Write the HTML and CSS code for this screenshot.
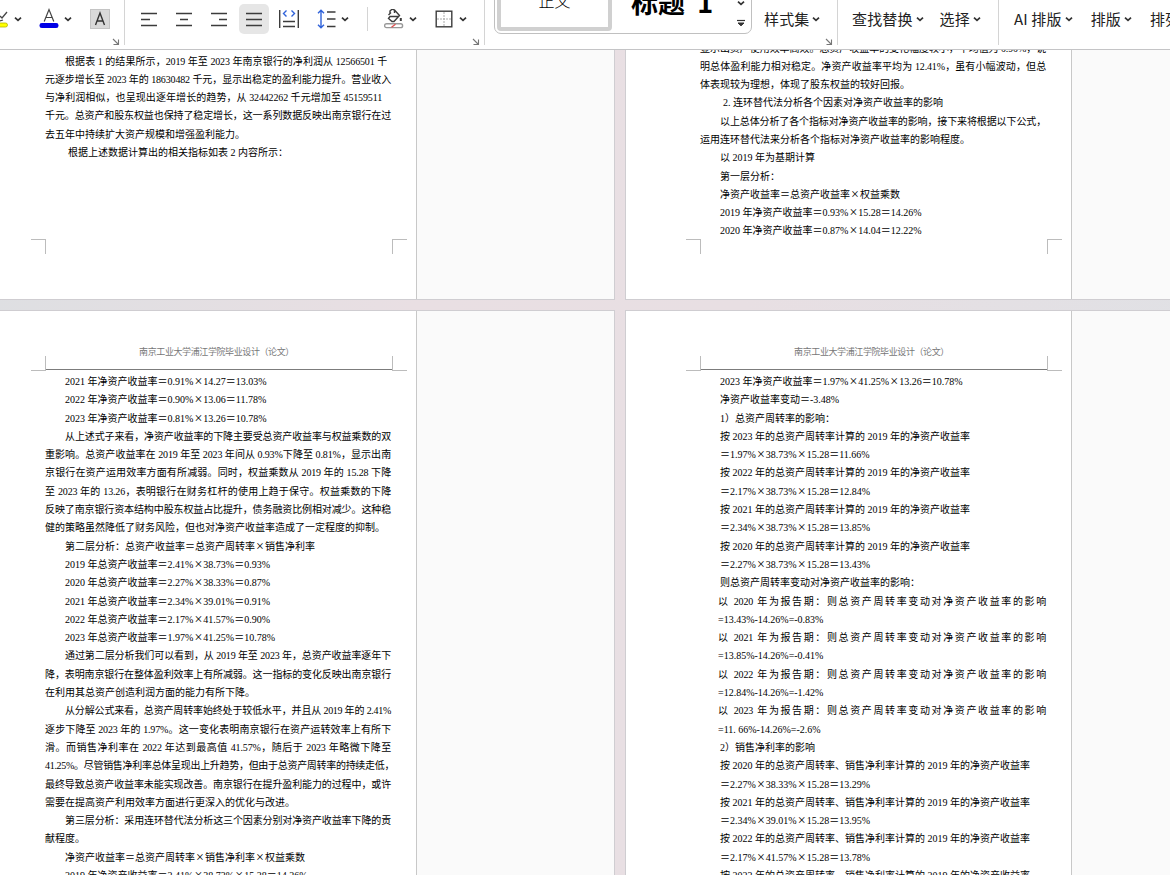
FILE: index.html
```
<!DOCTYPE html>
<html lang="zh-CN">
<head>
    <meta charset="UTF-8">
    <meta name="viewport" content="width=device-width, initial-scale=1.0">
    <title>毕业设计（论文）</title>
    <link rel="stylesheet" href="styles.css">
</head>
<body>
    <svg class="defs" width="0" height="0">
        <symbol id="chevron" viewBox="0 0 10 10"><path d="M2 3.600 5 6.400 8 3.600" fill="none" stroke="#333" stroke-width="1.7"/></symbol>
        <symbol id="launcher" viewBox="0 0 8 8"><path d="M1 1l5 5M6.500 1.500v5h-5" fill="none" stroke="#777" stroke-width="1.1"/></symbol>
    </svg>

    <header class="ribbon">
        <div class="group group-font">
            <svg class="icon-highlight" width="13" height="30" viewBox="0 0 13 30"><path d="M0 12l2 2 5-6M0 17l3-1" fill="none" stroke="#444" stroke-width="1.3"/><rect x="-8" y="19" width="15.500" height="4" rx="2" fill="#ff0" stroke="#b5b500" stroke-width=".8"/></svg>
            <svg class="chev"><use href="#chevron"/></svg>
            <svg class="icon-color" width="20" height="30" viewBox="0 0 20 30"><path d="M5.200 17.500 10 5.500l4.800 12M6.800 13.500h6.400" fill="none" stroke="#444" stroke-width="1.2"/><rect x=".5" y="19" width="19" height="5" rx="2.300" fill="#0000e6"/></svg>
            <svg class="chev"><use href="#chevron"/></svg>
            <svg class="icon-shade" width="20" height="20" viewBox="0 0 20 20"><rect x=".5" y=".5" width="19" height="19" fill="#d9d9d9" stroke="#c4c4c4"/><path d="M5.500 16 10 4l4.500 12M7 12h6" fill="none" stroke="#333" stroke-width="1.4"/></svg>
            <svg class="launcher"><use href="#launcher"/></svg>
        </div>

        <div class="group group-para">
            <div class="tool"><svg width="18" height="18"><path d="M1 3.500h16M1 9.500h9M1 15.500h16"/></svg></div>
            <div class="tool"><svg width="18" height="18"><path d="M1 3.500h16M5 9.500h8M1 15.500h16"/></svg></div>
            <div class="tool"><svg width="18" height="18"><path d="M1 3.500h16M9 9.500h8M1 15.500h16"/></svg></div>
            <div class="tool active"><svg width="18" height="18"><path d="M1 3.500h16M1 9.500h16M1 15.500h16"/></svg></div>
            <div class="tool"><svg width="20" height="20"><path d="M.7 1v18M19.300 1v18M4 12.500h12M4 17.500h12"/><path class="blue" d="M7.500 1.500 4.500 4.500l3 3M12.500 1.500l3 3-3 3"/></svg></div>
            <svg class="icon-spacing" width="20" height="20"><path d="M10 3h8.500M10 10h8.500M10 17.500h8.500"/><path class="blue" d="M4 1.500v17M1 4.200l3-3 3 3M1 15.800l3 3 3-3"/></svg>
            <svg class="chev"><use href="#chevron"/></svg>
            <span class="divider"></span>
            <svg class="icon-fill" width="20" height="20"><path d="M4.500 6 7 3.500M10.500 1l5 5.500-5.500 6H8L4.500 9.500 6 7.500H14M6 4V2q2.500-3 4.500-.8V4"/><path d="M16.800 9v3" stroke-width="2"/><rect x=".6" y="14.800" width="18" height="3.800" rx="1.900" stroke="#999"/><path class="red" d="M7.500 18.200l4-3"/></svg>
            <svg class="chev"><use href="#chevron"/></svg>
            <svg class="icon-border" width="18" height="18"><path d="M9 2v14M2 9h14" class="dots"/><rect x="1.200" y="1.200" width="15.600" height="15.600"/></svg>
            <svg class="chev"><use href="#chevron"/></svg>
            <svg class="launcher"><use href="#launcher"/></svg>
        </div>

        <div class="group group-style">
            <div class="gallery">
                <div class="style-item selected">正文</div>
                <div class="style-item heading">标题 1</div>
                <div class="gallery-nav">
                    <svg class="chev"><use href="#chevron"/></svg>
                    <svg width="10" height="10"><path d="M1 1.500h8" stroke="#333" stroke-width="1.200"/><path d="M2 4 5 6.800 8 4z" fill="#333" stroke="#333" stroke-width="1"/></svg>
                </div>
            </div>
            <button class="menu">样式集<svg class="chev"><use href="#chevron"/></svg></button>
            <svg class="launcher"><use href="#launcher"/></svg>
        </div>

        <div class="group group-edit">
            <button class="menu">查找替换<svg class="chev"><use href="#chevron"/></svg></button>
            <button class="menu">选择<svg class="chev"><use href="#chevron"/></svg></button>
        </div>

        <div class="group group-layout">
            <button class="menu">AI 排版<svg class="chev"><use href="#chevron"/></svg></button>
            <button class="menu">排版<svg class="chev"><use href="#chevron"/></svg></button>
            <button class="menu">排列</button>
        </div>
    </header>

    <main class="workspace">
        <section class="sheet left top">
            <div class="paper">
                <div class="text">
                    <p class="in full inset">根据表 1 的结果所示，2019 年至 2023 年南京银行的净利润从 12566501 千</p>
                    <p class="full">元逐步增长至 2023 年的 18630482 千元，显示出稳定的盈利能力提升。营业收入</p>
                    <p class="full inset-more">与净利润相似，也呈现出逐年增长的趋势，从 32442262 千元增加至 45159511</p>
                    <p class="full">千元。总资产和股东权益也保持了稳定增长，这一系列数据反映出南京银行在过</p>
                    <p>去五年中持续扩大资产规模和增强盈利能力。</p>
                    <p class="in3">根据上述数据计算出的相关指标如表 2 内容所示：</p>
                </div>
                <div class="crop crop-bottom"><i></i><i></i></div>
            </div>
        </section>

        <section class="sheet right top">
            <div class="paper">
                <div class="text">
                    <p class="full">显示出资产使用效率高效。总资产收益率的变化幅度较小，平均值为 0.90%，说</p>
                    <p class="full">明总体盈利能力相对稳定。净资产收益率平均为 12.41%，虽有小幅波动，但总</p>
                    <p>体表现较为理想，体现了股东权益的较好回报。</p>
                    <p class="in3">2. 连环替代法分析各个因素对净资产收益率的影响</p>
                    <p class="in full">以上总体分析了各个指标对净资产收益率的影响，接下来将根据以下公式，</p>
                    <p>运用连环替代法来分析各个指标对净资产收益率的影响程度。</p>
                    <p class="in">以 2019 年为基期计算</p>
                    <p class="in">第一层分析：</p>
                    <p class="in">净资产收益率＝总资产收益率<b>×</b>权益乘数</p>
                    <p class="in">2019 年净资产收益率＝0.93%<b>×</b>15.28＝14.26%</p>
                    <p class="in">2020 年净资产收益率＝0.87%<b>×</b>14.04＝12.22%</p>
                </div>
                <div class="crop crop-bottom"><i></i><i></i></div>
            </div>
        </section>

        <section class="sheet left">
            <div class="paper">
                <div class="page-header">南京工业大学浦江学院毕业设计（论文）</div>
                <div class="crop crop-top"><i></i><i></i></div>
                <div class="text">
                    <p class="in">2021 年净资产收益率＝0.91%<b>×</b>14.27＝13.03%</p>
                    <p class="in">2022 年净资产收益率＝0.90%<b>×</b>13.06＝11.78%</p>
                    <p class="in">2023 年净资产收益率＝0.81%<b>×</b>13.26＝10.78%</p>
                    <p class="in full">从上述式子来看，净资产收益率的下降主要受总资产收益率与权益乘数的双</p>
                    <p class="full">重影响。总资产收益率在 2019 年至 2023 年间从 0.93%下降至 0.81%，显示出南</p>
                    <p class="full">京银行在资产运用效率方面有所减弱。同时，权益乘数从 2019 年的 15.28 下降</p>
                    <p class="full">至 2023 年的 13.26，表明银行在财务杠杆的使用上趋于保守。权益乘数的下降</p>
                    <p class="full">反映了南京银行资本结构中股东权益占比提升，债务融资比例相对减少。这种稳</p>
                    <p>健的策略虽然降低了财务风险，但也对净资产收益率造成了一定程度的抑制。</p>
                    <p class="in">第二层分析：总资产收益率＝总资产周转率<b>×</b>销售净利率</p>
                    <p class="in">2019 年总资产收益率＝2.41%<b>×</b>38.73%＝0.93%</p>
                    <p class="in">2020 年总资产收益率＝2.27%<b>×</b>38.33%＝0.87%</p>
                    <p class="in">2021 年总资产收益率＝2.34%<b>×</b>39.01%＝0.91%</p>
                    <p class="in">2022 年总资产收益率＝2.17%<b>×</b>41.57%＝0.90%</p>
                    <p class="in">2023 年总资产收益率＝1.97%<b>×</b>41.25%＝10.78%</p>
                    <p class="in full">通过第二层分析我们可以看到，从 2019 年至 2023 年，总资产收益率逐年下</p>
                    <p class="full">降，表明南京银行在整体盈利效率上有所减弱。这一指标的变化反映出南京银行</p>
                    <p>在利用其总资产创造利润方面的能力有所下降。</p>
                    <p class="in full tight">从分解公式来看，总资产周转率始终处于较低水平，并且从 2019 年的 2.41%</p>
                    <p class="full">逐步下降至 2023 年的 1.97%。这一变化表明南京银行在资产运转效率上有所下</p>
                    <p class="full">滑。而销售净利率在 2022 年达到最高值 41.57%，随后于 2023 年略微下降至</p>
                    <p class="full tight">41.25%。尽管销售净利率总体呈现出上升趋势，但由于总资产周转率的持续走低，</p>
                    <p class="full">最终导致总资产收益率未能实现改善。南京银行在提升盈利能力的过程中，或许</p>
                    <p>需要在提高资产利用效率方面进行更深入的优化与改进。</p>
                    <p class="in full">第三层分析：采用连环替代法分析这三个因素分别对净资产收益率下降的贡</p>
                    <p>献程度。</p>
                    <p class="in">净资产收益率＝总资产周转率<b>×</b>销售净利率<b>×</b>权益乘数</p>
                    <p class="in">2019 年净资产收益率＝2.41%<b>×</b>38.73%<b>×</b>15.28＝14.26%</p>
                </div>
            </div>
        </section>

        <section class="sheet right">
            <div class="paper">
                <div class="page-header">南京工业大学浦江学院毕业设计（论文）</div>
                <div class="crop crop-top"><i></i><i></i></div>
                <div class="text">
                    <p class="in">2023 年净资产收益率＝1.97%<b>×</b>41.25%<b>×</b>13.26＝10.78%</p>
                    <p class="in">净资产收益率变动＝-3.48%</p>
                    <p class="in">1）总资产周转率的影响：</p>
                    <p class="in">按 2023 年的总资产周转率计算的 2019 年的净资产收益率</p>
                    <p class="in">＝1.97%<b>×</b>38.73%<b>×</b>15.28＝11.66%</p>
                    <p class="in">按 2022 年的总资产周转率计算的 2019 年的净资产收益率</p>
                    <p class="in">＝2.17%<b>×</b>38.73%<b>×</b>15.28＝12.84%</p>
                    <p class="in">按 2021 年的总资产周转率计算的 2019 年的净资产收益率</p>
                    <p class="in">＝2.34%<b>×</b>38.73%<b>×</b>15.28＝13.85%</p>
                    <p class="in">按 2020 年的总资产周转率计算的 2019 年的净资产收益率</p>
                    <p class="in">＝2.27%<b>×</b>38.73%<b>×</b>15.28＝13.43%</p>
                    <p class="in">则总资产周转率变动对净资产收益率的影响：</p>
                    <p class="hang full">以 2020 年为报告期：则总资产周转率变动对净资产收益率的影响</p>
                    <p class="hang">=13.43%-14.26%=-0.83%</p>
                    <p class="hang full">以 2021 年为报告期：则总资产周转率变动对净资产收益率的影响</p>
                    <p class="hang">=13.85%-14.26%=-0.41%</p>
                    <p class="hang full">以 2022 年为报告期：则总资产周转率变动对净资产收益率的影响</p>
                    <p class="hang">=12.84%-14.26%=-1.42%</p>
                    <p class="hang full">以 2023 年为报告期：则总资产周转率变动对净资产收益率的影响</p>
                    <p class="hang">=11. 66%-14.26%=-2.6%</p>
                    <p class="in">2）销售净利率的影响</p>
                    <p class="in">按 2020 年的总资产周转率、销售净利率计算的 2019 年的净资产收益率</p>
                    <p class="in">＝2.27%<b>×</b>38.33%<b>×</b>15.28＝13.29%</p>
                    <p class="in">按 2021 年的总资产周转率、销售净利率计算的 2019 年的净资产收益率</p>
                    <p class="in">＝2.34%<b>×</b>39.01%<b>×</b>15.28＝13.95%</p>
                    <p class="in">按 2022 年的总资产周转率、销售净利率计算的 2019 年的净资产收益率</p>
                    <p class="in">＝2.17%<b>×</b>41.57%<b>×</b>15.28＝13.78%</p>
                    <p class="in">按 2023 年的总资产周转率、销售净利率计算的 2019 年的净资产收益率</p>
                </div>
            </div>
        </section>
    </main>
</body>
</html>
```
FILE: styles.css
```
* {
    margin: 0;
    padding: 0;
    box-sizing: border-box;
}

body {
    width: 1170px;
    height: 875px;
    overflow: hidden;
    font-family: "Noto Sans CJK SC", sans-serif;
    color: #222;
    background-color: #e3e0e4;
}

svg {
    display: block;
    flex: none;
}

.defs {
    display: none;
}

/* Ribbon */
.ribbon {
    display: flex;
    height: 50px;
    overflow: hidden;
    background-color: #fff;
    border-bottom: 1px solid #c4c4c6;
}

.group {
    position: relative;
    display: flex;
    align-items: center;
    flex: none;
    height: 45px;
    padding-bottom: 7px;
    border-right: 1px solid #d4d4d4;
}

.group-font { width: 125px; }
.group-para { width: 360px; padding-left: 9px; }
.group-style { width: 353px; padding-left: 9px; }
.group-edit { width: 161px; padding-left: 14px; gap: 15px; }
.group-layout { width: 171px; padding-left: 15px; gap: 17px; border-right: none; }

.chev {
    width: 10px;
    height: 10px;
}

.launcher {
    position: absolute;
    right: 4px;
    bottom: -1px;
    width: 8px;
    height: 8px;
}

.icon-color { margin: 0 4px 0 16px; }
.icon-shade { margin-left: 17px; }

.tool {
    display: flex;
    align-items: center;
    justify-content: center;
    width: 30px;
    height: 30px;
    margin-right: 5px;
    border-radius: 5px;
}

.tool.active {
    background-color: #e6e6e6;
}

.group-para svg:not(.chev):not(.launcher) {
    fill: none;
    stroke: #3c3c3c;
    stroke-width: 1.4;
}

.group-para .blue { stroke: #2f62d9; }
.group-para .red { stroke: #e05050; }
.group-para .dots { stroke: #aaa; stroke-dasharray: 2 1; stroke-width: 1; }

.icon-spacing { margin: 0 3px 0 8px; }

.divider {
    width: 1px;
    height: 24px;
    margin: 0 16px 0 17px;
    background-color: #d4d4d4;
}

.icon-fill { margin-right: 4px; }
.icon-border { margin: 0 5px 0 17px; }

/* Style gallery, its upper part is scrolled out of view */
.gallery {
    display: flex;
    width: 258px;
    height: 47px;
    margin-top: -13px;
    padding: 0 4px 2px 2px;
    align-self: flex-start;
    flex: none;
    border: 1px solid #c0c0c0;
    border-radius: 7px;
}

.style-item {
    width: 115px;
    height: 43px;
    color: #000;
    white-space: nowrap;
}

.style-item.selected {
    border: 4px solid #d0d0d0;
    border-radius: 4px;
    font-size: 16px;
    font-weight: 300;
    line-height: 17px;
    text-align: center;
}

.style-item.heading {
    width: 121px;
    padding-left: 19px;
    font-size: 27px;
    font-weight: 700;
    line-height: 28px;
    word-spacing: 6px;
}

.gallery-nav {
    display: flex;
    flex-direction: column;
    gap: 11px;
    margin-left: 3px;
    padding-top: 10px;
}

.menu {
    display: flex;
    align-items: center;
    gap: 2px;
    flex: none;
    border: none;
    background: none;
    font-family: "Noto Sans CJK SC", sans-serif;
    font-size: 15px;
    line-height: 22px;
    letter-spacing: 0.15px;
    color: #222;
    white-space: nowrap;
}

.group-style .menu {
    margin-left: 12px;
}

/* Document pages */
.workspace {
    display: grid;
    grid-template-columns: 614px 544px;
    grid-template-rows: 249px 564px;
    gap: 12px;
    height: 825px;
    overflow: hidden;
    background: linear-gradient(100deg, #dddfe2 0%, #e9dfe3 35%, #e8dfe3 60%, #dfe1e5 100%);
}

.sheet {
    overflow: hidden;
    background-color: #fafafa;
    box-shadow: 0 0 0 1px #cfcdd1;
}

.paper {
    display: flow-root;
    height: 100%;
    border-right: 1px solid #c8c8c8;
    background-color: #fff;
}

.left .paper { width: 417px; padding-left: 45px; }
.right .paper { width: 446px; padding-left: 74px; }

.text {
    width: 346px;
    font-family: "Liberation Serif", "Noto Sans CJK SC", serif;
    font-size: 10px;
    line-height: 18.31px;
    color: #000;
    white-space: nowrap;
}

.text p {
    height: 18.31px;
}

.text b {
    display: inline-block;
    width: 10px;
    font-weight: 400;
    font-size: 14px;
    line-height: 10px;
    vertical-align: -1px;
    text-align: center;
}

.left.top .text { padding-top: 2.500px; height: 189px; }
.right.top .text { margin-top: -10.500px; height: 199.500px; }
.sheet:not(.top) .text { padding-top: 2px; }

.in { padding-left: 20px; }
.in3 { padding-left: 23px; }
.hang { padding-left: 18px; }

.full {
    letter-spacing: -0.15px;
    text-align-last: justify;
}

.full.tight {
    letter-spacing: -0.3px;
}

.inset { margin-right: 4px; }
.inset-more { margin-right: 9px; }

.page-header {
    width: 346px;
    height: 45px;
    padding: 32px 3px 0 0;
    font-size: 9px;
    line-height: 18px;
    letter-spacing: -0.4px;
    text-align: center;
    color: #777;
}

/* Margin corner marks */
.crop {
    display: flex;
    justify-content: space-between;
    width: 375px;
    margin-left: -14px;
}

.crop i {
    flex: none;
    width: 15px;
    height: 15px;
    border: 0 solid #bcbcbc;
}

.crop i:first-child { border-right-width: 1px; }
.crop i:last-child { border-left-width: 1px; }
.crop-bottom i { border-top-width: 1px; }
.crop-top i { border-bottom-width: 1px; }

.crop-bottom,
.crop-top {
    width: 376px;
}

/* Rule under the running header */
.crop-top::before {
    content: "";
    order: 1;
    width: 346px;
    height: 1px;
    margin-top: 13px;
    background-color: #7c7c7c;
}

.crop-top i:last-child { order: 2; }
```
